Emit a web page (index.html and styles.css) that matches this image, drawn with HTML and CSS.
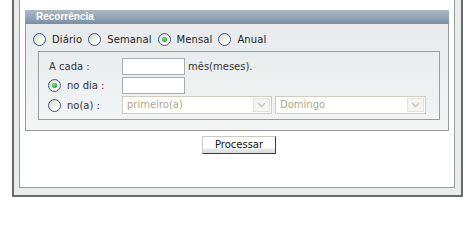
FILE: index.html
```html
<!DOCTYPE html>
<html lang="pt">
<head>
<meta charset="utf-8">
<link rel="stylesheet" href="styles.css">
</head>
<body>
<div class="frame">
  <div class="panel">
    <div class="rec">
      <div class="legend">Recorrência</div>
      <div class="types">
        <label class="opt"><span class="radio"></span>Diário</label>
        <label class="opt"><span class="radio"></span>Semanal</label>
        <label class="opt"><span class="radio checked"></span>Mensal</label>
        <label class="opt"><span class="radio"></span>Anual</label>
      </div>
      <div class="box">
        <div class="row">
          <span class="lbl">A cada :</span>
          <span class="input"></span>
          <span class="suffix">mês(meses).</span>
        </div>
        <div class="row">
          <span class="lbl"><span class="radio checked"></span>no dia :</span>
          <span class="input"></span>
        </div>
        <div class="row">
          <span class="lbl"><span class="radio"></span>no(a) :</span>
          <span class="select s1"><span class="val">primeiro(a)</span><span class="arrow"><svg width="9" height="6" viewBox="0 0 9 6"><path d="M1 1 L4.5 4.5 L8 1" fill="none" stroke="#c8c8c8" stroke-width="1.6"/></svg></span></span>
          <span class="select s2"><span class="val">Domingo</span><span class="arrow"><svg width="9" height="6" viewBox="0 0 9 6"><path d="M1 1 L4.5 4.5 L8 1" fill="none" stroke="#c8c8c8" stroke-width="1.6"/></svg></span></span>
        </div>
      </div>
    </div>
    <div class="actions">
      <span class="btn">Processar</span>
    </div>
  </div>
</div>
</body>
</html>
```
FILE: styles.css
```css
html, body {
  margin: 0;
  padding: 0;
  background: #fff;
}
body {
  font-family: "DejaVu Sans", Verdana, sans-serif;
  font-size: 10px;
  color: #222;
}
.frame {
  margin-left: 12px;
  width: 451px;
  box-sizing: border-box;
  border: 2px solid #6a6a6a;
  border-top: none;
  background: #e8eceb;
  padding: 0 6px 7px 5px;
}
.panel {
  height: 188px;
  box-sizing: border-box;
  border: 1px solid #9c9c9c;
  border-top: none;
  background: #fff;
  padding: 10px 5px 0 5px;
}
.rec {
  border: 1px solid #9a9a9a;
  border-top: none;
  background: linear-gradient(#e5e9eb, #f3f5f5);
  height: 121px;
  box-sizing: border-box;
}
.legend {
  height: 14px;
  line-height: 14px;
  margin: 0 -1px;
  padding-left: 11px;
  background: linear-gradient(#a9b8c6, #93a4b5 55%, #7a8ea2);
  color: #fff;
  font-family: "Liberation Sans", Arial, sans-serif;
  font-weight: bold;
  font-size: 10px;
}
.types {
  display: flex;
  align-items: center;
  height: 13px;
  padding: 9px 0 5px 7px;
  letter-spacing: 0.1px;
}
.opt {
  display: flex;
  align-items: center;
  margin-right: 6px;
}
.radio {
  display: inline-block;
  position: relative;
  width: 13px;
  height: 13px;
  box-sizing: border-box;
  border: 1px solid #33597f;
  border-radius: 50%;
  background: linear-gradient(135deg, #d6d6cf, #fdfdfb 75%);
  margin-right: 6px;
  flex: none;
}
.radio.checked::after {
  content: "";
  position: absolute;
  left: 3px;
  top: 3px;
  width: 5px;
  height: 5px;
  border-radius: 50%;
  background: radial-gradient(circle at 40% 40%, #8ee08e, #21a121 70%);
}
.box {
  margin: 0 8px 0 12px;
  border: 1px solid #9c9c9c;
  padding: 6px 0 5px 10px;
  display: flex;
  flex-direction: column;
  gap: 2px;
}
.row {
  display: flex;
  align-items: center;
  height: 17px;
}
.row:last-child {
  height: 18px;
}
.lbl {
  width: 73px;
  display: flex;
  align-items: center;
  color: #333;
}
.lbl .radio {
  margin-left: -1px;
  margin-right: 6px;
}
.input {
  width: 63px;
  height: 17px;
  box-sizing: border-box;
  border: 1px solid #a5acb2;
  background: #fff;
}
.suffix {
  margin-left: 3px;
  color: #333;
}
.select {
  display: flex;
  align-items: stretch;
  height: 18px;
  box-sizing: border-box;
  border: 1px solid #cfcdc0;
  background: #fffffb;
  color: #aca899;
  padding: 1px;
}
.s1 { width: 150px; }
.s2 { width: 151px; margin-left: 3px; }
.val {
  flex: 1;
  line-height: 14px;
  padding-left: 3px;
}
.arrow {
  width: 15px;
  border: 1px solid #e2e2dc;
  background: #f4f4f0;
  display: flex;
  align-items: center;
  justify-content: center;
}
.actions {
  display: flex;
  justify-content: center;
  padding-left: 4px;
  margin-top: 5px;
}
.btn {
  width: 74px;
  height: 18px;
  box-sizing: border-box;
  border: 1px solid;
  border-color: #c8c8c8 #3c3c3c #3c3c3c #c8c8c8;
  background: linear-gradient(#fff 0, #fff 65%, #e4e4e4 80%, #dcdcdc 100%);
  color: #111;
  text-align: center;
  line-height: 15px;
}
```
